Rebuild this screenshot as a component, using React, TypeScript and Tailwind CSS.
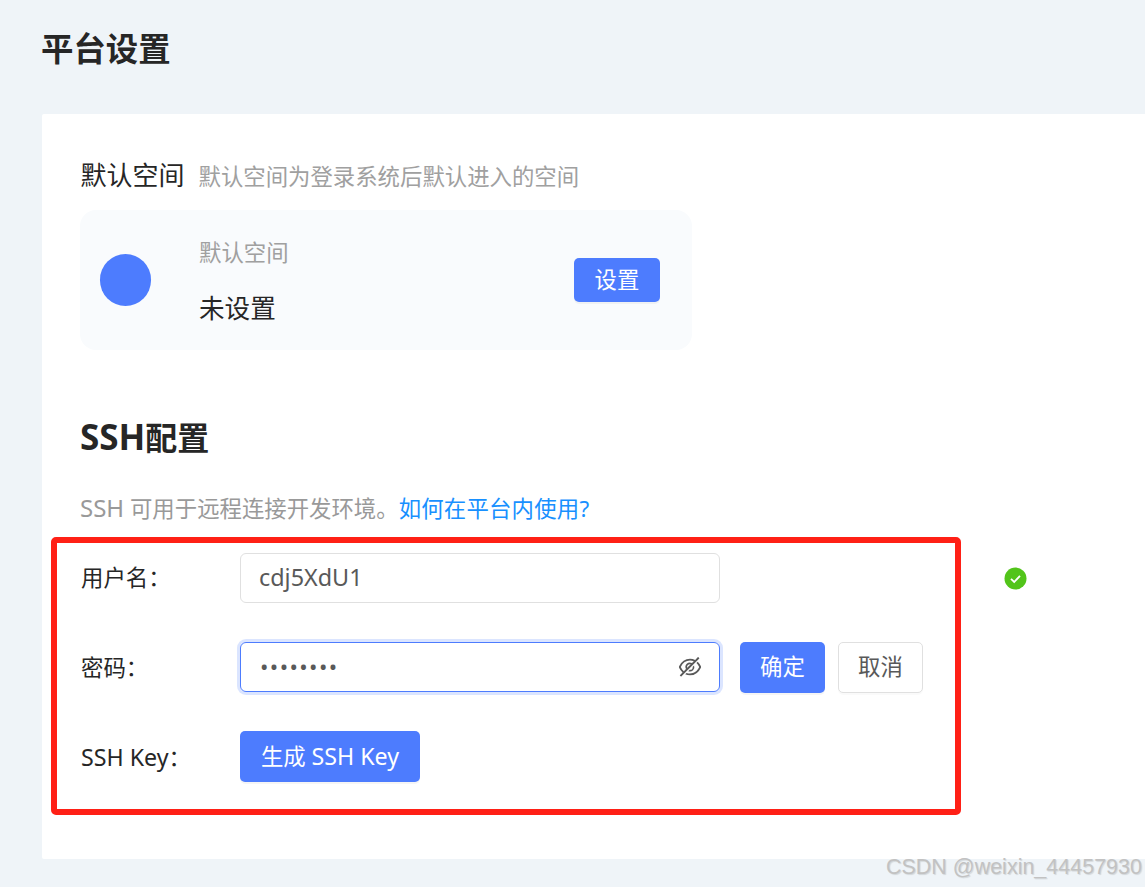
import React from "react";
import { AiOutlineEyeInvisible } from "react-icons/ai";

const font = { fontFamily: '"Noto Sans", "Noto Sans CJK SC", sans-serif' };

export default function App() {
  return (
    <div
      className="relative w-[1145px] h-[887px] overflow-hidden bg-[#eff4f8] text-[22.4px] leading-none text-[#262626]"
      style={font}
    >
      <div className="h-[114px] pl-[41px] pt-[27px]">
        <h1 className="text-[32.4px] leading-[42px] font-bold text-[#262626]">平台设置</h1>
      </div>

      <div className="ml-[42px] w-[1200px] h-[745px] rounded-[2px] bg-white pl-[38px] pt-[44px]">
        <div className="flex items-baseline h-[35px]">
          <span className="text-[26px] leading-[34px] w-[118.5px] pl-[0.5px]">默认空间</span>
          <span className="text-[#a0a0a0] leading-[34px]">默认空间为登录系统后默认进入的空间</span>
        </div>

        <div className="mt-[17px] flex items-center w-[612px] h-[140px] rounded-[16px] bg-[#f9fbfd] pl-[20px] pr-[32px]">
          <div className="w-[51px] h-[52px] rounded-full bg-[#4d7cfe]" />
          <div className="ml-[48px] pt-[4px] flex-1 flex flex-col">
            <span className="text-[#a0a0a0] leading-[30px]">默认空间</span>
            <span className="mt-[24px] text-[25.6px] leading-[34px]">未设置</span>
          </div>
          <button className="w-[86px] h-[44px] rounded-[5px] bg-[#4d7cfe] text-white shadow-[0_2px_0_rgba(0,0,0,0.04)]">
            设置
          </button>
        </div>

        <h2 className="mt-[65px] text-[32px] leading-[44px] font-bold">
          <span className="text-[35px]">SSH</span>配置
        </h2>

        <p className="mt-[33px] leading-[30px] text-[#999999]">
          <span className="text-[24px]">SSH</span> 可用于远程连接开发环境。
          <span className="text-[#1890ff] tracking-[0.2px]">如何在平台内使用?</span>
        </p>

        <div className="mt-[29px] flex items-start h-[50px]">
          <span className="w-[160px] pl-[1px] leading-[50px]">用户名：</span>
          <div className="w-[480px] h-[50px] rounded-[6px] border border-[#e0e0e0] pl-[18px] flex items-center text-[23.4px] text-[#595959]">
            cdj5XdU1
          </div>
          <svg className="ml-[284px] mt-[14px]" width="23" height="23" viewBox="0 0 23 23">
            <circle cx="11.5" cy="11.5" r="11" fill="#52c41a" />
            <path d="M7 11.8l3.2 3.2L16 8.8" fill="none" stroke="#fff" strokeWidth="1.8" />
          </svg>
        </div>

        <div className="mt-[39px] flex items-start h-[50px]">
          <span className="w-[160px] pl-[1px] leading-[52px]">密码：</span>
          <div className="w-[480px] h-[50px] rounded-[6px] border border-[#4d7cfe] shadow-[0_0_0_3px_rgba(77,124,254,0.2)] pl-[19px] pr-[16px] flex items-center justify-between text-[#595959]">
            <span className="text-[22.4px] tracking-[1.4px]">••••••••</span>
            <AiOutlineEyeInvisible size={26} color="#595959" />
          </div>
          <button className="ml-[20px] w-[85px] h-[51px] rounded-[5px] bg-[#4d7cfe] text-white shadow-[0_2px_0_rgba(0,0,0,0.04)]">
            确定
          </button>
          <button className="ml-[13px] w-[85px] h-[51px] rounded-[5px] border border-[#e0e0e0] bg-white text-[#595959] shadow-[0_2px_0_rgba(0,0,0,0.02)]">
            取消
          </button>
        </div>

        <div className="mt-[39px] flex items-center h-[51px]">
          <span className="w-[160px] pl-[1px] pt-[2px]">
            <span className="text-[23.2px]">SSH Key</span>：
          </span>
          <button className="w-[180px] h-[51px] rounded-[5px] bg-[#4d7cfe] text-white shadow-[0_2px_0_rgba(0,0,0,0.04)]">
            生成 <span className="text-[23.2px]">SSH Key</span>
          </button>
        </div>
      </div>

      <div className="absolute left-[51px] top-[537px] w-[910px] h-[278px] rounded-[5px] border-[6px] border-[#ff2016] pointer-events-none" />

      <div
        className="absolute right-[3px] top-[854px] text-[21.5px] leading-[26px] text-[#c2c2c2] [text-shadow:1px_1px_1px_rgba(0,0,0,0.12)]"
        style={{ fontFamily: '"Liberation Sans", sans-serif' }}
      >
        CSDN @weixin_44457930
      </div>
    </div>
  );
}
